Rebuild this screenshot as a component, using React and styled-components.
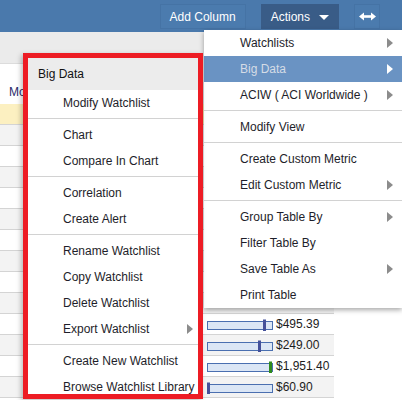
import React from "react";
import styled, { createGlobalStyle } from "styled-components";

const Global = createGlobalStyle`
  html, body { margin: 0; padding: 0; background: #ffffff; }
  body { font-family: "Liberation Sans", Arial, sans-serif; font-size: 12px; }
  * { box-sizing: border-box; }
`;

const Page = styled.div`
  position: relative;
  width: 402px;
  height: 400px;
  overflow: hidden;
  background: #ffffff;
`;

const TopBar = styled.div`
  height: 32px;
  background: #4a79ac;
  display: flex;
  justify-content: flex-end;
  align-items: flex-start;
  padding: 4px 22px 0 0;
  gap: 15px;
`;

const BarButton = styled.div`
  height: 25px;
  display: flex;
  align-items: center;
  justify-content: center;
  color: #ffffff;
  font-size: 12px;
  white-space: nowrap;
  background: ${(p) => (p.$dark ? "#395c87" : "#4b7bae")};
  border: 1px solid ${(p) => (p.$dark ? "#395c87" : "#4573a5")};
  padding: ${(p) => (p.$icon ? "0" : "0 9px")};
  width: ${(p) => (p.$icon ? "26px" : "auto")};
`;

const Caret = styled.span`
  width: 0;
  height: 0;
  margin-left: 9px;
  margin-top: 1px;
  border-top: 5px solid #ffffff;
  border-left: 5px solid transparent;
  border-right: 5px solid transparent;
`;

const Toolbar = styled.div`
  height: 31px;
  background: #ebebeb;
`;

const HeadRow = styled.div`
  height: 41px;
  width: 334px;
  display: flex;
  background: #ebebeb;
`;

const HeadCell = styled.div`
  width: 120px;
  background: #ffffff;
  border-top: 1px solid #dcdcdc;
  display: flex;
  align-items: flex-end;
  padding: 0 0 5px 9px;
  color: #2a2a6a;
  font-size: 12px;
`;

const Rows = styled.div`
  width: 334px;
`;

const Row = styled.div`
  height: 21px;
  border-bottom: 1px solid #d4d4d4;
  background: ${(p) => (p.$tone === "y" ? "#fcf0c1" : p.$tone === "g" ? "#f3f3f3" : "#ffffff")};
  display: grid;
  grid-template-columns: 207px 66px 1fr;
  align-items: center;
`;

const BarCell = styled.div`
  display: flex;
  align-items: center;
  margin-top: 2px;
`;

const Value = styled.div`
  padding-left: 3px;
  font-size: 12px;
  color: #1c1c1c;
  white-space: nowrap;
`;

const Menu = styled.div`
  position: absolute;
  top: 30px;
  left: 204px;
  width: 198px;
  background: #ffffff;
  box-shadow: 0 2px 5px rgba(0, 0, 0, 0.35);
  z-index: 2;
`;

const Item = styled.div`
  height: 26px;
  display: flex;
  align-items: center;
  justify-content: space-between;
  white-space: nowrap;
  padding: ${(p) => (p.$sub ? "0 5px 0 35px" : "0 9px 0 36px")};
  font-size: 12px;
  color: ${(p) => (p.$active ? "#d5dce6" : "#1e1e2a")};
  background: ${(p) => (p.$active ? "#6a93c3" : "transparent")};
`;

const Arrow = styled.span`
  flex: none;
  width: 0;
  height: 0;
  border-left: 6px solid ${(p) => (p.$light ? "#ffffff" : "#8c8c8c")};
  border-top: 5px solid transparent;
  border-bottom: 5px solid transparent;
`;

const Sep = styled.div`
  height: 1px;
  background: #d2d2d2;
  margin: 2px 0 3px;
`;

const SubMenu = styled.div`
  position: absolute;
  top: 53px;
  left: 23px;
  width: 180px;
  height: 346px;
  border: 5px solid #ed1c24;
  background: #ffffff;
  overflow: hidden;
  z-index: 3;
  box-shadow: -2px 2px 5px rgba(0, 0, 0, 0.25);
`;

const SubHeader = styled.div`
  height: 32px;
  background: #ececec;
  display: flex;
  align-items: center;
  padding-left: 10px;
  font-size: 12px;
  color: #111111;
`;

function Bar({ pos, green }) {
  const x = Math.min(62, Math.max(0, Math.round(pos * 65) - 1));
  return (
    <svg width="66" height="13" viewBox="0 0 66 13">
      <rect x="0.5" y="2.5" width="65" height="8" fill="#dbe6f5" stroke="#4a6fb0" />
      <rect x={x} y="0.5" width="3" height="11.5" fill={green ? "#2e8a1e" : "#44509a"} />
    </svg>
  );
}

function SwapIcon() {
  return (
    <svg width="17" height="9" viewBox="0 0 17 9">
      <polygon points="0,4.5 5,0.5 5,8.5" fill="#fff" />
      <polygon points="17,4.5 12,0.5 12,8.5" fill="#fff" />
      <rect x="4" y="3.2" width="9" height="2.6" fill="#fff" />
    </svg>
  );
}

const rowData = [
  { tone: "y" },
  ...Array.from({ length: 8 }, (_, i) => ({ tone: i % 2 === 0 ? "g" : "w" })),
  { tone: "g" },
  { tone: "w", pos: 0.88, value: "$495.39" },
  { tone: "g", pos: 0.8, value: "$249.00" },
  { tone: "w", pos: 0.99, value: "$1,951.40", green: true },
  { tone: "g", pos: 0.02, value: "$60.90" },
  { tone: "w" },
];

const actions = [
  { label: "Watchlists", arrow: true },
  { label: "Big Data", arrow: true, active: true },
  { label: "ACIW ( ACI Worldwide )", arrow: true },
  "sep",
  { label: "Modify View" },
  "sep",
  { label: "Create Custom Metric" },
  { label: "Edit Custom Metric", arrow: true },
  "sep",
  { label: "Group Table By", arrow: true },
  { label: "Filter Table By" },
  { label: "Save Table As", arrow: true },
  { label: "Print Table" },
];

const subItems = [
  { label: "Modify Watchlist" },
  "sep",
  { label: "Chart" },
  { label: "Compare In Chart" },
  "sep",
  { label: "Correlation" },
  { label: "Create Alert" },
  "sep",
  { label: "Rename Watchlist" },
  { label: "Copy Watchlist" },
  { label: "Delete Watchlist" },
  { label: "Export Watchlist", arrow: true },
  "sep",
  { label: "Create New Watchlist" },
  { label: "Browse Watchlist Library" },
];

export default function App() {
  return (
    <Page>
      <Global />
      <TopBar>
        <BarButton>Add Column</BarButton>
        <BarButton $dark>
          Actions
          <Caret />
        </BarButton>
        <BarButton $icon>
          <SwapIcon />
        </BarButton>
      </TopBar>
      <Toolbar />
      <HeadRow>
        <HeadCell>Move</HeadCell>
      </HeadRow>
      <Rows>
        {rowData.map((r, i) => (
          <Row key={i} $tone={r.tone}>
            <div />
            <BarCell>{r.value ? <Bar pos={r.pos} green={r.green} /> : null}</BarCell>
            <Value>{r.value || ""}</Value>
          </Row>
        ))}
      </Rows>

      <Menu>
        {actions.map((a, i) =>
          a === "sep" ? (
            <Sep key={i} />
          ) : (
            <Item key={i} $active={a.active}>
              <span>{a.label}</span>
              {a.arrow ? <Arrow $light={a.active} /> : null}
            </Item>
          )
        )}
      </Menu>

      <SubMenu>
        <SubHeader>Big Data</SubHeader>
        {subItems.map((a, i) =>
          a === "sep" ? (
            <Sep key={i} />
          ) : (
            <Item key={i} $sub>
              <span>{a.label}</span>
              {a.arrow ? <Arrow /> : null}
            </Item>
          )
        )}
      </SubMenu>
    </Page>
  );
}
